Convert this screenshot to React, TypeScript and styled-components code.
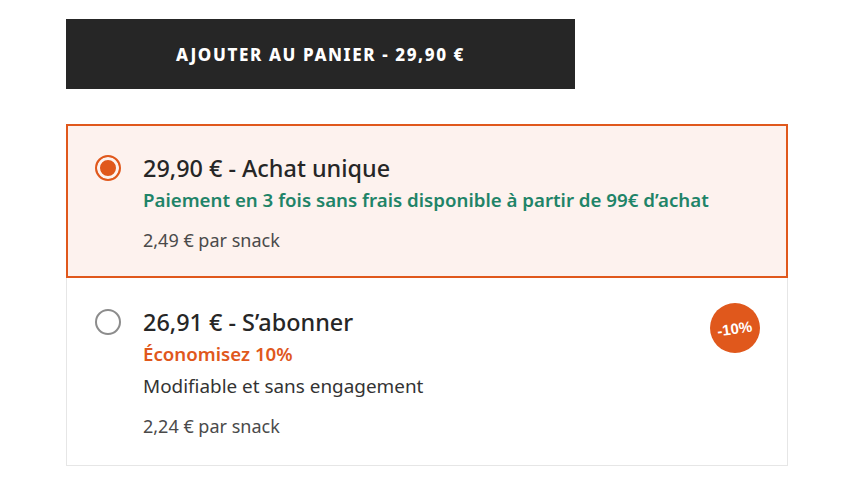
import styled, { createGlobalStyle } from "styled-components";

const GlobalStyle = createGlobalStyle`
  body {
    margin: 0;
    background: #ffffff;
    font-family: 'Noto Sans', 'Open Sans', sans-serif;
    color: #262626;
  }
`;

type Offer = {
  price: string;
  label: string;
  note?: string;
  noteColor?: string;
  detail?: string;
  perSnack: string;
  badge?: string;
  selected?: boolean;
};

const offers: Offer[] = [
  {
    price: "29,90 €",
    label: "Achat unique",
    note: "Paiement en 3 fois sans frais disponible à partir de 99€ d’achat",
    noteColor: "#1f8468",
    perSnack: "2,49 € par snack",
    selected: true,
  },
  {
    price: "26,91 €",
    label: "S’abonner",
    note: "Économisez 10%",
    noteColor: "#e0581c",
    detail: "Modifiable et sans engagement",
    perSnack: "2,24 € par snack",
    badge: "-10%",
  },
];

export default function App() {
  return (
    <>
      <GlobalStyle />
      <Page>
        <CartButton>Ajouter au panier - 29,90 €</CartButton>
        <Options>
          {offers.map((o) => (
            <OptionCard key={o.label} $selected={!!o.selected}>
              <Radio $selected={!!o.selected} />
              <Texts>
                <Title>
                  {o.price} - {o.label}
                </Title>
                {o.note && <Note $color={o.noteColor}>{o.note}</Note>}
                {o.detail && <Detail>{o.detail}</Detail>}
                <PerSnack>{o.perSnack}</PerSnack>
              </Texts>
              {o.badge && <Badge><span>{o.badge}</span></Badge>}
            </OptionCard>
          ))}
        </Options>
      </Page>
    </>
  );
}

const Page = styled.div`
  display: flex;
  flex-direction: column;
  align-items: flex-start;
  width: 722px;
  padding: 19px 0 0 66px;
`;

const CartButton = styled.button`
  width: 509px;
  height: 70px;
  padding: 0;
  border: none;
  background: #262626;
  color: #ffffff;
  font-family: 'Noto Sans', sans-serif;
  font-weight: 800;
  font-size: 17px;
  letter-spacing: 1.6px;
  text-transform: uppercase;
  cursor: pointer;
`;

const Options = styled.div`
  display: flex;
  flex-direction: column;
  width: 100%;
  margin-top: 35px;
`;

const OptionCard = styled.div<{ $selected: boolean }>`
  position: relative;
  display: flex;
  align-items: flex-start;
  gap: 22px;
  box-sizing: border-box;
  width: 100%;
  padding: ${(p) => (p.$selected ? "28px 24px 24px 27px" : "30px 24px 27px 28px")};
  border: ${(p) => (p.$selected ? "2px solid #e0581c" : "1px solid #e6e6e6")};
  border-top-width: ${(p) => (p.$selected ? "2px" : "0")};
  background: ${(p) => (p.$selected ? "#fdf2ee" : "#ffffff")};
`;

const Radio = styled.span<{ $selected: boolean }>`
  flex: none;
  box-sizing: border-box;
  width: 26px;
  height: 26px;
  margin-top: 1px;
  border-radius: 50%;
  border: 2px solid ${(p) => (p.$selected ? "#e0581c" : "#8c8c8c")};
  background: ${(p) => (p.$selected ? "#e0581c" : "transparent")};
  box-shadow: ${(p) => (p.$selected ? "inset 0 0 0 3px #fdf2ee" : "none")};
`;

const Texts = styled.div`
  display: flex;
  flex-direction: column;
  gap: 6px;
`;

const Title = styled.div`
  font-size: 23.4px;
  line-height: 28px;
  font-weight: 500;
  color: #262626;
`;

const Note = styled.div<{ $color?: string }>`
  font-size: 18.7px;
  line-height: 24px;
  font-weight: 600;
  color: ${(p) => p.$color};
`;

const Detail = styled.div`
  margin-top: 2px;
  font-size: 18.9px;
  line-height: 24px;
  color: #333333;
`;

const PerSnack = styled.div`
  margin-top: 10px;
  font-size: 18px;
  line-height: 24px;
  color: #4a4a4a;
`;

const Badge = styled.div`
  position: absolute;
  top: 25px;
  right: 27px;
  display: flex;
  align-items: center;
  justify-content: center;
  width: 50px;
  height: 50px;
  border-radius: 50%;
  background: #e0581c;
  color: #ffffff;
  font-family: 'Liberation Sans', Arial, sans-serif;
  font-weight: 700;
  font-size: 15px;

  span {
    transform: rotate(-8deg);
  }
`;
